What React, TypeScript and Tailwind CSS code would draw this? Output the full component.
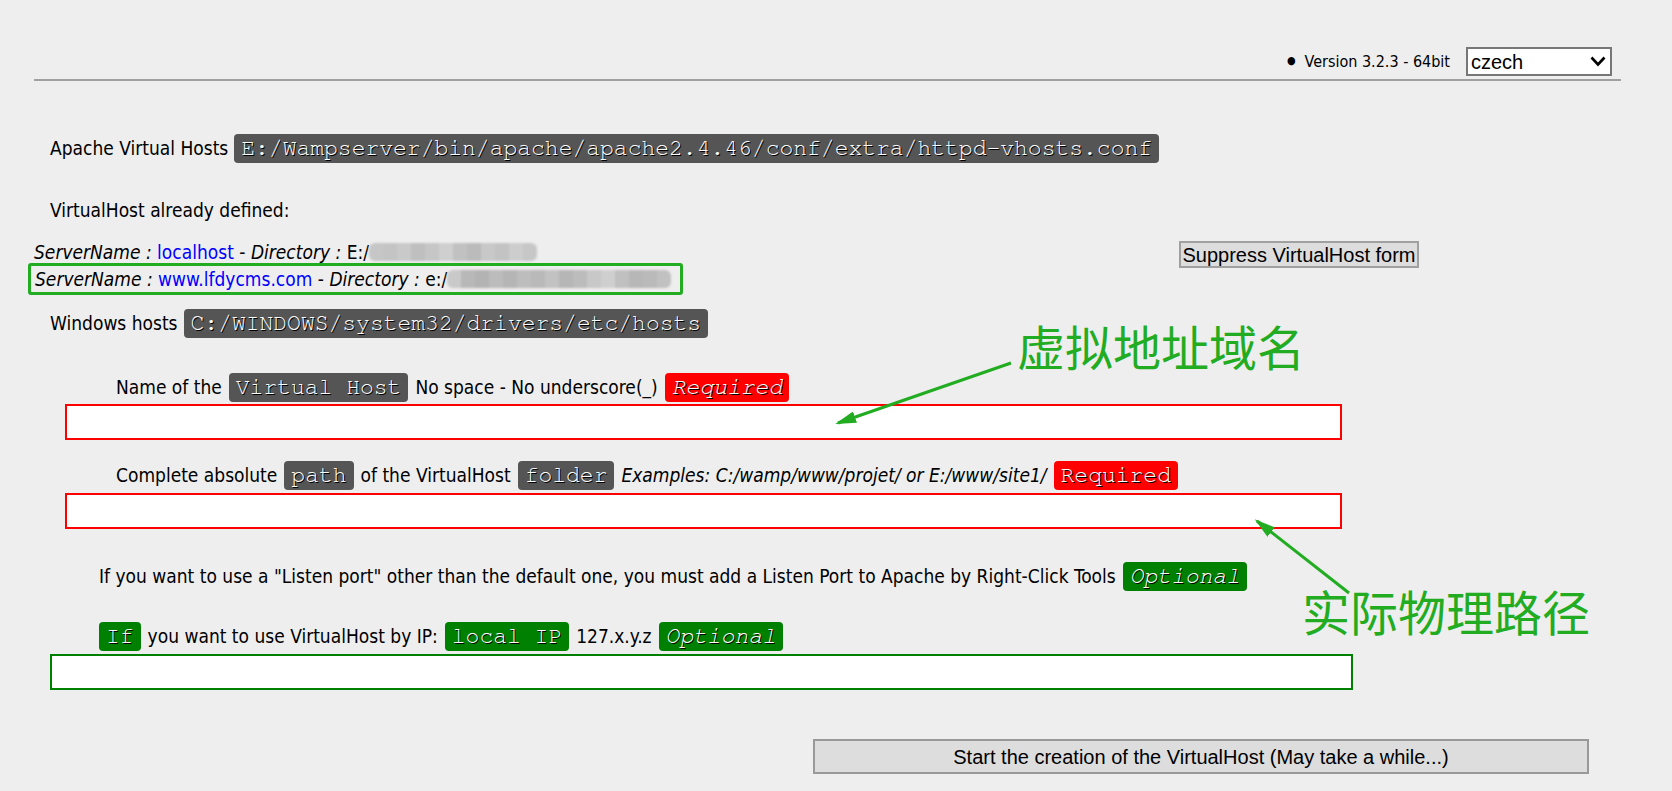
import React from "react";

const badgeBase =
  "inline-flex items-center h-[29px] px-[7px] rounded-[4px] text-[23px] leading-none text-white whitespace-pre [text-shadow:1px_1px_0_#000] font-['Nimbus_Mono_PS','FreeMono','Courier_New','Liberation_Mono',monospace]";

function Badge({
  tone = "gray",
  italic = false,
  children,
}: {
  tone?: "gray" | "red" | "green";
  italic?: boolean;
  children: React.ReactNode;
}) {
  const bg =
    tone === "red" ? "bg-[#ff0000]" : tone === "green" ? "bg-[#008000]" : "bg-[#555555]";
  return <span className={`${badgeBase} ${bg} ${italic ? "italic" : ""}`}>{children}</span>;
}

function Blur({ shades, h = 18 }: { shades: string[]; h?: number }) {
  return (
    <span className="inline-flex overflow-hidden rounded-[6px] blur-[1px]" style={{ height: h }}>
      {shades.map((c, i) => (
        <span key={i} className="block w-[14px] h-full" style={{ backgroundColor: c }} />
      ))}
    </span>
  );
}

const shadesA = ["#c6c6c6", "#c4c4c4", "#c9c9c9", "#bfbfbf", "#c6c6c6", "#cfcfcf", "#c1c1c1", "#bbbbbb", "#c8c8c8", "#c3c3c3", "#cdcdcd", "#c7c7c7"];
const shadesB = ["#c9c9c9", "#b8b8b8", "#b3b3b3", "#bcbcbc", "#b5b5b5", "#bdbdbd", "#b9b9b9", "#c2c2c2", "#b6b6b6", "#bcbcbc", "#c8c8c8", "#cfcfcf", "#c0c0c0", "#b7b7b7", "#bababa", "#c1c1c1"];

export default function App() {
  return (
    <div className="relative w-full h-[791px] overflow-hidden bg-[#eeeeee] text-black text-[19px] font-['DejaVu_Sans_Condensed','Liberation_Sans',sans-serif]">
      {/* header */}
      <div className="flex items-center justify-end pt-[47px] pr-[60px]">
        <span className="text-[11px] mr-[9px]">●</span>
        <span className="text-[16px]">Version 3.2.3 - 64bit</span>
        <div className="ml-[16px] flex items-center justify-between w-[146px] h-[29px] border-2 border-[#777777] bg-white pl-[3px] pr-[4px] font-['Liberation_Sans',sans-serif] text-[20px]">
          <span>czech</span>
          <svg width="16" height="11" viewBox="0 0 16 11">
            <polyline points="1.5,1.5 8,8.5 14.5,1.5" fill="none" stroke="#000" strokeWidth="2.6" />
          </svg>
        </div>
      </div>
      <div className="ml-[34px] mr-[51px] mt-[3px] h-[2px] bg-[#a0a0a0]" />

      <div className="ml-[50px] mt-[53px] flex items-center gap-[6px]">
        <span>Apache Virtual Hosts</span>
        <Badge>E:/Wampserver/bin/apache/apache2.4.46/conf/extra/httpd-vhosts.conf</Badge>
      </div>

      <div className="ml-[50px] mt-[37px] h-[20px] flex items-center">VirtualHost already defined:</div>

      <div className="mt-[22px] flex items-start justify-between pr-[253px]">
        <div className="flex flex-col">
          <div className="ml-[34px] h-[20px] flex items-center whitespace-pre">
            <i>ServerName : </i>
            <span className="text-[#0000ff]">localhost</span>
            <span> - </span>
            <i>Directory : </i>
            <span>E:/</span>
            <Blur shades={shadesA} />
          </div>
          <div className="ml-[28px] mt-[1px] w-[655px] h-[32px] border-[3px] border-[#22ac22] rounded-[3px] flex items-center pl-[4px] whitespace-pre">
            <i>ServerName : </i>
            <span className="text-[#0000ff]">www.lfdycms.com</span>
            <span> - </span>
            <i>Directory : </i>
            <span>e:/</span>
            <Blur shades={shadesB} />
          </div>
        </div>
        <button className="-mt-[1px] h-[27px] w-[240px] border-2 border-[#a0a0a0] bg-[#dddddd] font-['Liberation_Sans',sans-serif] text-[20px] leading-none">
          Suppress VirtualHost form
        </button>
      </div>

      <div className="ml-[50px] mt-[14px] flex items-center gap-[6px]">
        <span>Windows hosts</span>
        <Badge>C:/WINDOWS/system32/drivers/etc/hosts</Badge>
      </div>

      <div className="ml-[116px] mt-[35px] flex items-center gap-[7px]">
        <span>Name of the</span>
        <Badge>Virtual Host</Badge>
        <span>No space - No underscore(_)</span>
        <Badge tone="red" italic>
          Required
        </Badge>
      </div>
      <div className="ml-[65px] mt-[2px] w-[1277px] h-[36px] border-2 border-[#ff0000] bg-white" />

      <div className="ml-[116px] mt-[21px] flex items-center gap-[7px]">
        <span>Complete absolute</span>
        <Badge>path</Badge>
        <span>of the VirtualHost</span>
        <Badge>folder</Badge>
        <i>Examples: C:/wamp/www/projet/ or E:/www/site1/</i>
        <Badge tone="red">Required</Badge>
      </div>
      <div className="ml-[65px] mt-[3px] w-[1277px] h-[36px] border-2 border-[#ff0000] bg-white" />

      <div className="ml-[99px] mt-[33px] flex items-center gap-[7px]">
        <span>
          If you want to use a "Listen port" other than the default one, you must add a Listen Port to Apache by Right-Click Tools
        </span>
        <Badge tone="green" italic>
          Optional
        </Badge>
      </div>

      <div className="ml-[99px] mt-[31px] flex items-center gap-[7px]">
        <Badge tone="green">If</Badge>
        <span>you want to use VirtualHost by IP:</span>
        <Badge tone="green">local IP</Badge>
        <span>127.x.y.z</span>
        <Badge tone="green" italic>
          Optional
        </Badge>
      </div>
      <div className="ml-[50px] mt-[3px] w-[1303px] h-[36px] border-2 border-[#008000] bg-white" />

      <button className="ml-[813px] mt-[49px] w-[776px] h-[35px] border-2 border-[#999999] bg-[#dddddd] font-['Liberation_Sans',sans-serif] text-[20px]">
        Start the creation of the VirtualHost (May take a while...)
      </button>

      {/* annotations */}
      <div className="absolute left-[1017px] top-[321px] text-[48px] leading-none text-[#22ac22] font-['Noto_Sans_CJK_SC',sans-serif]">
        虚拟地址域名
      </div>
      <div className="absolute left-[1302px] top-[586px] text-[48px] leading-none text-[#22ac22] font-['Noto_Sans_CJK_SC',sans-serif]">
        实际物理路径
      </div>
      <svg className="absolute inset-0 pointer-events-none" width="1672" height="791">
        <defs>
          <marker id="ah" markerWidth="7" markerHeight="4" refX="6" refY="2" orient="auto" markerUnits="strokeWidth">
            <path d="M0,0 L7,2 L0,4 Z" fill="#22ac22" />
          </marker>
        </defs>
        <line x1="1011" y1="363" x2="838" y2="423" stroke="#22ac22" strokeWidth="3" markerEnd="url(#ah)" />
        <line x1="1349" y1="593" x2="1257" y2="521" stroke="#22ac22" strokeWidth="3" markerEnd="url(#ah)" />
      </svg>
    </div>
  );
}
